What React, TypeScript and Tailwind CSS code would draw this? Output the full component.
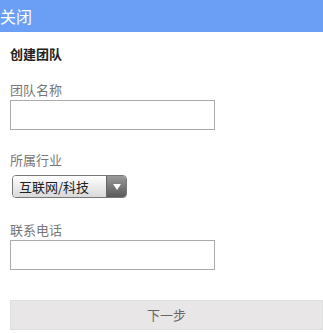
const font = { fontFamily: '"Noto Sans CJK SC", "Noto Sans", sans-serif' };

function Field({ label, className = "" }: { label: string; className?: string }) {
  return (
    <div className={className}>
      <div className="text-[13px] leading-[20px] text-[#777]">{label}</div>
      <input className="block w-[205px] h-[30px] border border-[#aaa] bg-white outline-none" />
    </div>
  );
}

export default function App() {
  return (
    <div className="w-[323px] h-[333px] bg-white overflow-hidden" style={font}>
      <header className="h-8 bg-[#6a9ff5] flex items-center">
        <span className="text-white text-[16px] leading-none">关闭</span>
      </header>

      <div className="pl-[10px]">
        <h1 className="mt-3 text-[13px] leading-[20px] font-bold text-[#222]">创建团队</h1>

        <Field label="团队名称" className="mt-4" />

        <div className="mt-5">
          <div className="text-[13px] leading-[20px] text-[#777]">所属行业</div>
          <div className="mt-[5px] ml-[2px] w-[115px] h-[23px] flex rounded-[4px] border border-[#777] overflow-hidden">
            <div className="flex-1 flex items-center pl-[6px] text-[13px] text-[#222] bg-gradient-to-b from-white to-[#d9d9d9]">
              互联网/科技
            </div>
            <div className="w-[20px] flex items-center justify-center bg-gradient-to-b from-[#9a9a9a] to-[#5a5a5a] border-l border-[#666]">
              <svg width="8" height="6" viewBox="0 0 8 6">
                <path d="M0 0 H8 L4 6 Z" fill="#fff" />
              </svg>
            </div>
          </div>
        </div>

        <Field label="联系电话" className="mt-[22px]" />

        <button className="mt-[30px] w-full h-[30px] bg-[#e8e6e6] border border-[#ddd] text-[13px] text-[#666]">
          下一步
        </button>
      </div>
    </div>
  );
}
